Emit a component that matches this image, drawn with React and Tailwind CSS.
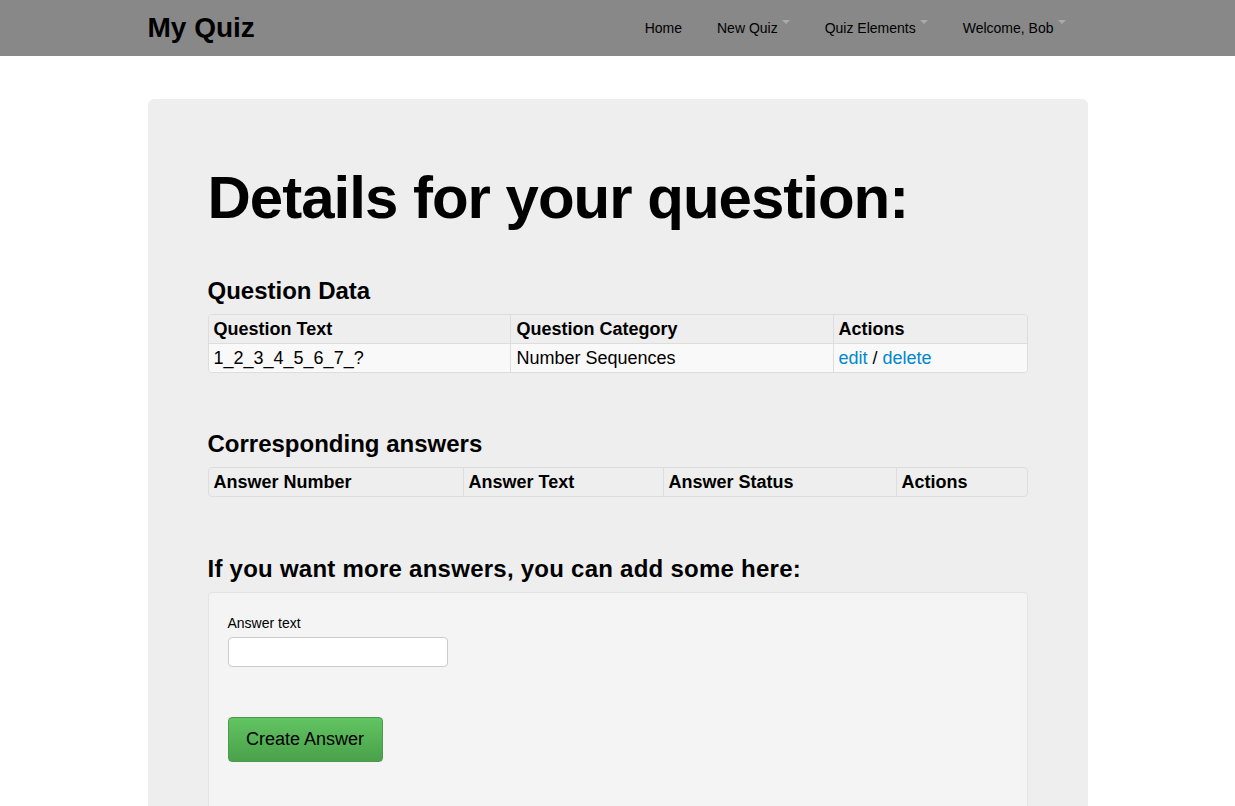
import React from 'react';

const Caret = () => (
  <span className="ml-[4px] inline-block w-0 h-0 border-l-[4px] border-r-[4px] border-t-[4px] border-l-transparent border-r-transparent border-t-[#aaaaaa] -translate-y-[6px]" />
);

const NavItem = ({ label, caret }) => (
  <a className="flex items-center text-[14px] text-black cursor-pointer">
    <span>{label}</span>
    {caret && <Caret />}
  </a>
);

const App = () => {
  return (
    <div className="min-h-screen bg-white text-black" style={{ fontFamily: '"Liberation Sans", Arial, sans-serif' }}>
      {/* Navbar */}
      <div className="h-[56px] bg-[#888888]">
        <div className="w-[940px] mx-auto h-full flex items-center justify-between">
          <span className="text-[28px] font-bold leading-none">My Quiz</span>
          <nav className="flex items-center gap-[35px] pr-[22px]">
            <NavItem label="Home" />
            <NavItem label="New Quiz" caret />
            <NavItem label="Quiz Elements" caret />
            <NavItem label="Welcome, Bob" caret />
          </nav>
        </div>
      </div>

      {/* Hero */}
      <div className="w-[940px] mx-auto mt-[43px] bg-[#eeeeee] rounded-t-[6px] px-[60px] pt-[69px] pb-[60px]">
        <h1 className="text-[60px] font-bold leading-[60px] tracking-[-1px]">Details for your question:</h1>

        <h3 className="mt-[48px] text-[24px] font-bold leading-[30px]">Question Data</h3>
        <table className="mt-[8px] w-full border-separate border-spacing-0 border border-[#dddddd] rounded-[4px] text-[18px] overflow-hidden">
          <thead>
            <tr className="bg-[#eeeeee]">
              <th className="w-[301px] text-left font-bold px-[5px] py-[4px] leading-[20px]">Question Text</th>
              <th className="w-[323px] text-left font-bold px-[6px] py-[4px] leading-[20px] border-l border-[#dddddd]">Question Category</th>
              <th className="text-left font-bold px-[5px] py-[4px] leading-[20px] border-l border-[#dddddd]">Actions</th>
            </tr>
          </thead>
          <tbody>
            <tr className="bg-[#f9f9f9]">
              <td className="px-[5px] py-[4px] leading-[20px] border-t border-[#dddddd]">1_2_3_4_5_6_7_?</td>
              <td className="px-[6px] py-[4px] leading-[20px] border-t border-l border-[#dddddd]">Number Sequences</td>
              <td className="px-[5px] py-[4px] leading-[20px] border-t border-l border-[#dddddd]">
                <a className="text-[#0088cc] cursor-pointer">edit</a> / <a className="text-[#0088cc] cursor-pointer">delete</a>
              </td>
            </tr>
          </tbody>
        </table>

        <h3 className="mt-[56px] text-[24px] font-bold leading-[30px]">Corresponding answers</h3>
        <table className="mt-[8px] w-full border-separate border-spacing-0 border border-[#dddddd] rounded-[4px] text-[18px]">
          <thead>
            <tr>
              <th className="w-[254px] text-left font-bold px-[5px] py-[4px] leading-[20px]">Answer Number</th>
              <th className="w-[200px] text-left font-bold px-[5px] py-[4px] leading-[20px] border-l border-[#dddddd]">Answer Text</th>
              <th className="w-[233px] text-left font-bold px-[5px] py-[4px] leading-[20px] border-l border-[#dddddd]">Answer Status</th>
              <th className="text-left font-bold px-[5px] py-[4px] leading-[20px] border-l border-[#dddddd]">Actions</th>
            </tr>
          </thead>
          <tbody />
        </table>

        <h3 className="mt-[57px] text-[24px] font-bold leading-[30px] tracking-[0.25px]">If you want more answers, you can add some here:</h3>
        <div className="mt-[8px] bg-[#f4f4f4] border border-[#e3e3e3] rounded-[4px] px-[19px] pt-[20px] pb-[60px]">
          <label className="block text-[14px] leading-[20px]">Answer text</label>
          <input type="text" className="mt-[4px] block w-[220px] h-[30px] bg-white border border-[#cccccc] rounded-[4px] px-[6px] text-[14px] outline-none" />
          <button className="mt-[50px] w-[155px] h-[45px] rounded-[4px] border border-[#4a9a4a] bg-gradient-to-b from-[#62c462] to-[#4aa14a] text-[18px] text-black">
            Create Answer
          </button>
        </div>
      </div>
    </div>
  );
};

export default App;
